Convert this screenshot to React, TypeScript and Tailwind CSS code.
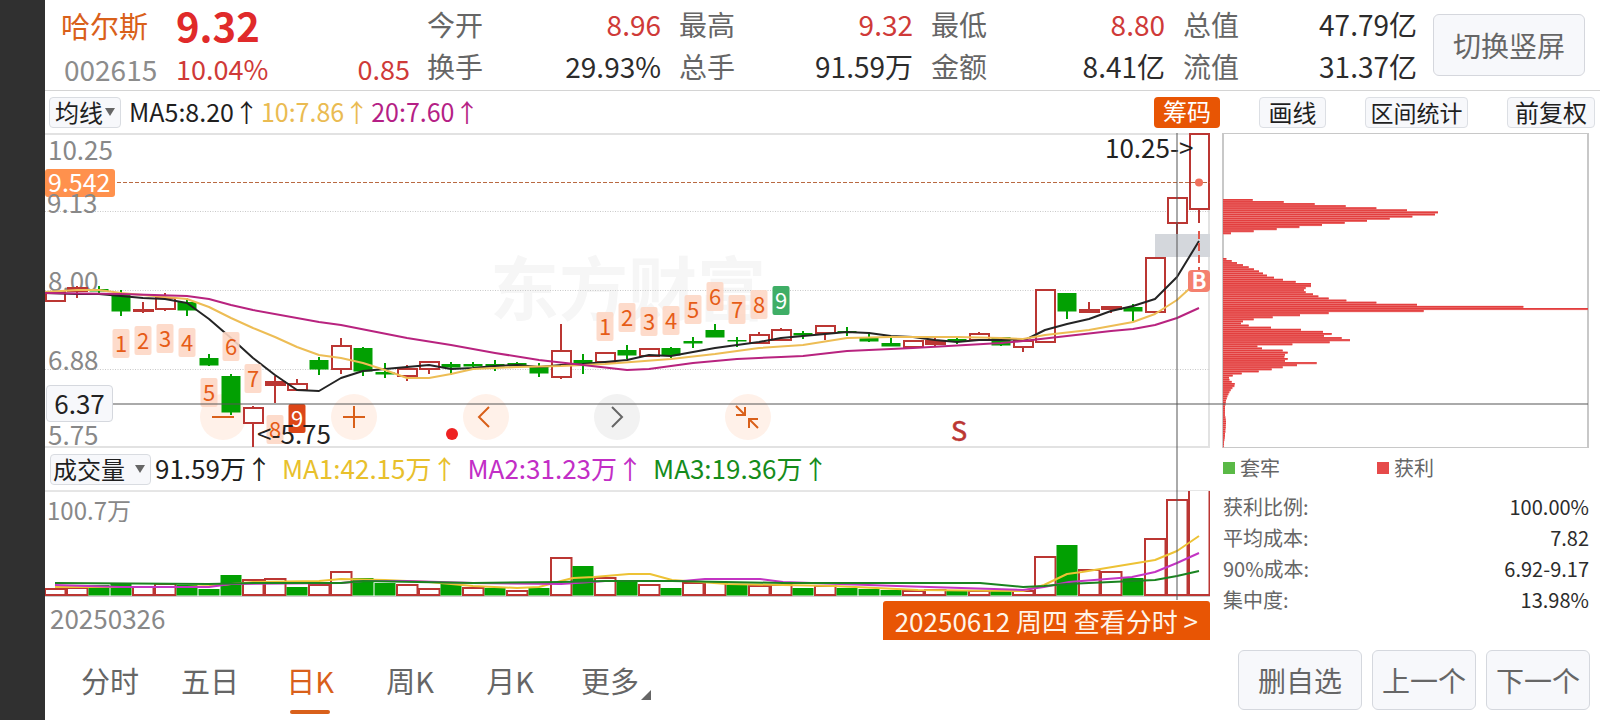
import React from "react";

type Candle = [kind: "u" | "d", top: number, bottom: number, high: number, low: number];

const STEP = 22;
const FIRST_X = 55;
const xAt = (i: number) => FIRST_X + i * STEP;

const RED = "#bb3633";
const GREEN = "#02a002";

const candles: Candle[] = [
  ["u", 292, 301, 292, 302], ["u", 288, 291, 286, 298], ["d", 289, 291, 286, 293], ["d", 293, 311, 290, 316],
  ["u", 310, 311, 302, 313], ["u", 298, 309, 293, 311], ["d", 302, 310, 298, 316], ["d", 358, 365, 354, 366],
  ["d", 376, 412, 374, 415], ["u", 408, 423, 406, 447], ["u", 382, 385, 376, 403], ["u", 384, 390, 379, 391],
  ["d", 360, 369, 357, 375], ["u", 346, 369, 338, 374], ["d", 348, 371, 347, 376], ["d", 372, 374, 363, 378],
  ["u", 369, 376, 365, 381], ["u", 362, 369, 362, 374], ["d", 364, 367, 362, 375], ["d", 364, 366, 362, 367],
  ["d", 364, 366, 360, 371], ["d", 363, 365, 362, 366], ["d", 367, 373, 363, 377], ["u", 351, 377, 324, 379],
  ["d", 360, 363, 354, 374], ["u", 353, 362, 353, 362], ["d", 350, 355, 345, 359], ["u", 349, 356, 349, 357],
  ["d", 348, 355, 347, 358], ["d", 341, 343, 337, 348], ["d", 330, 337, 324, 337], ["d", 340, 341, 337, 347],
  ["u", 335, 343, 332, 343], ["u", 330, 340, 328, 340], ["d", 333, 335, 331, 339], ["u", 326, 333, 326, 340],
  ["d", 331, 332, 327, 336], ["d", 337, 341, 332, 342], ["d", 343, 346, 338, 346], ["u", 341, 347, 341, 348],
  ["u", 341, 344, 338, 346], ["d", 339, 341, 338, 344], ["u", 334, 340, 332, 340], ["d", 337, 345, 337, 346],
  ["u", 341, 347, 341, 352], ["u", 290, 342, 290, 342], ["d", 293, 311, 293, 319], ["u", 310, 312, 302, 312],
  ["u", 307, 309, 306, 313], ["d", 307, 311, 304, 321], ["u", 258, 312, 258, 312], ["u", 198, 223, 198, 234],
  ["u", 134, 209, 134, 223],
];

const ma5 = "45,293 77,294 99,294 121,296 143,298 165,299 187,303 209,319 231,338 253,358 275,375 297,390 319,391 341,378 363,371 385,369 407,367 429,365 451,369 473,368 495,366 517,365 539,367 561,365 583,364 605,362 627,360 649,355 671,356 693,352 715,348 737,345 759,342 781,338 803,336 825,334 847,332 869,333 891,336 913,337 935,340 957,342 979,340 1001,340 1027,339 1045,330 1067,324 1089,319 1111,311 1133,306 1155,299 1177,277 1199,241";
const ma10 = "45,292 77,290 99,290 121,293 165,297 187,299 209,307 231,318 253,328 275,337 297,347 319,355 341,358 363,363 385,370 407,378 429,378 451,374 473,369 517,367 561,366 605,364 671,359 715,354 759,348 803,345 847,338 891,337 957,337 1001,338 1023,339 1045,335 1089,330 1111,326 1133,322 1155,314 1177,300 1199,280";
const ma20 = "45,293 121,294 187,296 209,299 231,305 253,310 319,322 341,325 407,338 451,345 495,353 539,360 583,365 627,370 649,369 693,363 737,359 781,357 803,356 847,351 913,348 1001,343 1023,341 1067,336 1111,331 1133,329 1155,325 1177,318 1199,308";

type Mark = [label: string, i: number, top: number, tone: "soft" | "sell" | "buy"];
const marks: Mark[] = [
  ["1", 3, 329, "soft"], ["2", 4, 326, "soft"], ["3", 5, 324, "soft"], ["4", 6, 328, "soft"], ["5", 7, 378, "soft"],
  ["6", 8, 332, "soft"], ["7", 9, 364, "soft"], ["8", 10, 415, "soft"], ["9", 11, 404, "sell"],
  ["1", 25, 312, "soft"], ["2", 26, 303, "soft"], ["3", 27, 307, "soft"], ["4", 28, 306, "soft"], ["5", 29, 295, "soft"],
  ["6", 30, 282, "soft"], ["7", 31, 295, "soft"], ["8", 32, 290, "soft"], ["9", 33, 286, "buy"],
];
const markFill = { soft: "#fdd7c5", sell: "#dc4618", buy: "#3fae66" };

const volumes: ["u" | "d", number][] = [
  ["u", 589], ["u", 588], ["d", 585], ["d", 583], ["u", 587], ["u", 584], ["d", 585], ["d", 589], ["d", 575],
  ["u", 580], ["u", 579], ["d", 587], ["u", 585], ["u", 572], ["d", 578], ["d", 583], ["u", 585], ["u", 589],
  ["d", 584], ["u", 588], ["d", 588], ["u", 591], ["d", 588], ["u", 558], ["d", 566], ["u", 578], ["d", 581],
  ["u", 585], ["d", 588], ["u", 583], ["u", 582], ["d", 585], ["u", 586], ["u", 585], ["d", 588], ["u", 586],
  ["d", 588], ["d", 589], ["d", 590], ["u", 591], ["u", 590], ["d", 591], ["u", 591], ["d", 591], ["u", 591],
  ["u", 557], ["d", 545], ["u", 570], ["u", 572], ["d", 578], ["u", 539], ["u", 500], ["u", 480],
];
const vma1 = "55,587 121,587 187,587 209,586 231,584 253,582 319,581 341,579 385,580 429,582 473,586 517,588 539,587 561,581 573,578 594,577 629,574 650,574 672,580 728,584 783,585 834,586 918,590 1023,591 1044,585 1067,574 1082,572 1155,560 1177,551 1199,536";
const vma2 = "55,585 121,587 209,587 231,584 341,583 363,581 407,581 473,583 561,584 605,581 683,581 705,579 760,579 783,582 897,586 1023,590 1044,587 1069,582 1132,577 1155,572 1177,563 1199,553";
const vma3 = "55,583 209,584 253,583 341,583 363,581 473,583 561,582 605,581 672,581 783,583 980,583 1023,587 1044,586 1067,584 1111,582 1155,580 1177,576 1199,571";

const upperChips = [89, 182, 275, 368, 460, 552, 645, 636, 568, 500, 432, 365, 297, 229, 161, 92, 24];
const lowerChips = [
  10, 26, 42, 60, 77, 93, 108, 120, 132, 153, 180, 218, 264, 264, 248, 243, 248, 270, 286, 317, 370, 460, 582, 901,
  1095, 602, 317, 231, 149, 92, 60, 54, 77, 144, 234, 300, 326, 303, 356, 381, 320, 208, 103, 117, 179, 194, 186,
  184, 194, 186, 281, 222, 179, 146, 107, 56, 29, 18, 19, 26, 35, 34, 28, 23, 19, 16, 13, 11, 9, 8, 7, 6, 6, 6, 6,
  6, 7, 8, 9, 9, 8, 8, 7, 7, 6, 6, 5, 4, 3, 3, 2,
];

const quotes = [
  { a: "今开", av: "8.96", b: "换手", bv: "29.93%" },
  { a: "最高", av: "9.32", b: "总手", bv: "91.59万" },
  { a: "最低", av: "8.80", b: "金额", bv: "8.41亿" },
  { a: "总值", av: "47.79亿", b: "流值", bv: "31.37亿", plain: true },
];

const costs = [
  ["获利比例:", "100.00%"],
  ["平均成本:", "7.82"],
  ["90%成本:", "6.92-9.17"],
  ["集中度:", "13.98%"],
];

function Header() {
  return (
    <header className="flex h-[91px] border-b border-[#d4d4d4] pr-[15px] pl-4">
      <div className="w-[349px] pt-1">
        <div className="flex h-[42px] items-center">
          <h1 className="w-[115px] text-[29px] leading-10 text-[#d9601a]">哈尔斯</h1>
          <strong className="text-[40px] leading-10 font-bold text-[#e02a2a]">9.32</strong>
        </div>
        <div className="flex h-[42px] items-center pt-1 text-[27px] leading-9 text-[#cf3a38]">
          <span className="w-[115px] pl-[3px] text-[28px] text-[#8c8c8c]">002615</span>
          <span>10.04%</span>
          <span className="ml-auto">0.85</span>
        </div>
      </div>
      <dl className="ml-[17px] grid flex-1 grid-cols-4 gap-x-[18px] pt-[3px] text-[28px] leading-[42px]">
        {quotes.map((q) => (
          <div key={q.a} className="grid grid-cols-[auto_1fr] content-start">
            <dt className="text-[#666]">{q.a}</dt>
            <dd className={q.plain ? "text-right text-[#2c2c2c]" : "text-right text-[#cf3a38]"}>{q.av}</dd>
            <dt className="text-[#666]">{q.b}</dt>
            <dd className="text-right text-[#2c2c2c]">{q.bv}</dd>
          </div>
        ))}
      </dl>
      <button className="mt-[14px] ml-4 h-[62px] w-[152px] rounded-md border border-[#d5d7dd] bg-[#f7f8fb] text-[28px] text-[#666]">
        切换竖屏
      </button>
    </header>
  );
}

function Picker({ label, value, className, caret }: { label: string; value: string; className: string; caret: string }) {
  return (
    <span className="relative flex">
      <select aria-label={label} className={`${className} h-[31px] appearance-none rounded-[4px] border border-[#d9dce1] bg-[#f7f8fb] pb-[2px] text-[24px] leading-7 text-[#1f1f1f]`}>
        <option>{value}</option>
      </select>
      <svg viewBox="0 0 10 8" className={`${caret} pointer-events-none absolute top-[11px] h-2 w-[10px]`} aria-hidden="true">
        <path d="M0 0h10L5 8z" fill="#666" />
      </svg>
    </span>
  );
}

const chip = "h-[31px] rounded-[4px] border border-[#dcdfe4] bg-[#f7f8fb] pb-[2px] leading-7 text-[#1f1f1f]";

function Toolbar() {
  return (
    <div className="flex h-[42px] items-center pr-[5px] pl-1">
      <Picker label="均线" value="均线" className="w-[72px] pl-[5px]" caret="right-[6px]" />
      <p className="ml-2 flex gap-[2px] pb-[2px] text-[25px] leading-8">
        <span className="text-[#1f1f1f]">MA5:8.20↑</span>
        <span className="text-[#eabb52]">10:7.86↑</span>
        <span className="text-[#b51f86]">20:7.60↑</span>
      </p>
      <div className="ml-auto flex gap-[39px] text-[24px]">
        <button className="h-[31px] w-[66px] rounded-[4px] bg-[#e85504] pb-[2px] leading-7 text-white">筹码</button>
        <button className={`${chip} w-[67px]`}>画线</button>
        <button className={`${chip} w-[103px] text-[23px]`}>区间统计</button>
        <button className={`${chip} w-[88px]`}>前复权</button>
      </div>
    </div>
  );
}

function PriceChart() {
  return (
    <svg viewBox="45 133 1165 315" className="block w-full" fontFamily="'Noto Sans CJK SC', sans-serif" fontSize="26">
      <text x="490" y="315" fontSize="69" fontWeight="bold" fill="#f6f6f6">东方财富</text>
      <path d="M45 134H1210M45 447H1210M1209 134V447" stroke="#e2e2e2" strokeWidth="2" />
      <path d="M45 211.5H1210M45 290.5H1210M45 369.5H1210" stroke="#c9c9c9" strokeDasharray="1 1.5" />
      <rect x="1155" y="234" width="55" height="23" fill="#d4d7dc" />
      <g fill="#888">
        <text x="48" y="160">10.25</text>
        <text x="48" y="291">8.00</text>
        <text x="48" y="370">6.88</text>
        <text x="48" y="445">5.75</text>
      </g>
      <g fill="#fff1e9">
        {[223, 354, 486, 748].map((x) => <circle key={x} cx={x} cy="417" r="23" />)}
      </g>
      <circle cx="617" cy="417" r="23" fill="#f2f2f2" />
      {candles.map(([kind, top, bottom, high, low], i) => {
        const x = xAt(i);
        if (kind === "d")
          return (
            <g key={i} fill={GREEN}>
              <rect x={x - 9.5} y={top} width="19" height={bottom - top + 0.5} />
              <rect x={x - 1} y={high} width="2" height={low - high} />
            </g>
          );
        return (
          <g key={i} stroke={RED} strokeWidth="2">
            <path d={`M${x} ${high}V${top}M${x} ${bottom}V${low}`} />
            <rect x={x - 9} y={top} width="19" height={bottom - top} fill={bottom - top < 4 ? RED : "#fff"} />
          </g>
        );
      })}
      <g fill="none" strokeWidth="2" strokeLinejoin="round">
        <polyline points={ma5} stroke="#242424" />
        <polyline points={ma10} stroke="#edbd55" />
        <polyline points={ma20} stroke="#b8237f" />
      </g>
      {marks.map(([label, i, top, tone]) => (
        <g key={`${label}-${i}`}>
          <rect x={xAt(i) - 8.5} y={top} width="17" height="29" rx="2" fill={markFill[tone]} fillOpacity={tone === "soft" ? 0.9 : 1} />
          <text x={xAt(i)} y={top + 23} fontSize="22" textAnchor="middle" fill={tone === "soft" ? "#e65c17" : "#fff"}>{label}</text>
        </g>
      ))}
      <path d="M45 182.5H1210" stroke="#b96a42" strokeDasharray="4 2" />
      <circle cx="1199" cy="182.5" r="4" fill="#f0705c" />
      <rect x="45" y="169" width="70" height="28" rx="3" fill="#ff914d" />
      <text x="48" y="192" fontSize="25" fill="#fff">9.542</text>
      <text x="47" y="213" fill="#888">9.13</text>
      <text x="1105" y="158" fill="#222">{"10.25->"}</text>
      <text x="257" y="444" fill="#222">{"<-5.75"}</text>
      <circle cx="452" cy="434" r="6" fill="#ee2222" />
      <text x="959" y="441" fontSize="27" textAnchor="middle" fill={RED} stroke={RED} strokeWidth="0.6">S</text>
      <path d="M1199 231V270" stroke="#e0574a" strokeWidth="2" strokeDasharray="8 4" />
      <rect x="1188" y="270" width="22" height="22" rx="4" fill="#f4806e" />
      <text x="1199" y="289" fontSize="22" textAnchor="middle" fontWeight="bold" fill="#fff">B</text>
    </svg>
  );
}

const tools = [
  { name: "缩小", d: "M12 23H34", color: "#d9601a" },
  { name: "放大", d: "M12 23H34M23 12V34", color: "#d9601a" },
  { name: "左移", d: "M27 13L17 23L27 33", color: "#d9601a" },
  { name: "右移", d: "M19 13L29 23L19 33", color: "#666" },
  { name: "收起", d: "M12 12L21 21M21 13V21H12M34 34L25 25M25 34V25H34", color: "#d9601a" },
];

function ChartTools() {
  return (
    <div className="absolute top-[261px] left-[155px] flex gap-[85px]">
      {tools.map((t) => (
        <button key={t.name} aria-label={t.name} className="size-[46px] rounded-full">
          <svg viewBox="0 0 46 46" fill="none" stroke={t.color} strokeWidth="2">
            <path d={t.d} />
          </svg>
        </button>
      ))}
    </div>
  );
}

function VolumeChart() {
  return (
    <svg viewBox="45 490 1165 107" className="block w-full" fontFamily="'Noto Sans CJK SC', sans-serif">
      <path d="M45 491H1210M45 596.5H1210M1209.5 491V596" stroke="#ccc" />
      <text x="47" y="520" fontSize="24" fill="#888">100.7万</text>
      <svg x="45" y="491" width="1165" height="105" viewBox="45 491 1165 105">
        {volumes.map(([kind, top], i) =>
          kind === "d" ? (
            <rect key={i} x={xAt(i) - 10.5} y={top} width="21" height={595.5 - top} fill={GREEN} />
          ) : (
            <rect key={i} x={xAt(i) - 10} y={top} width="20.5" height={595 - top} fill="#fff" stroke={RED} strokeWidth="2" />
          )
        )}
        <g fill="none" strokeWidth="2" strokeLinejoin="round">
          <polyline points={vma1} stroke="#edc235" />
          <polyline points={vma2} stroke="#c334c3" />
          <polyline points={vma3} stroke="#1a8420" />
        </g>
      </svg>
    </svg>
  );
}

function ChipRows({ data, start }: { data: number[]; start: number }) {
  return (
    <>
      {data.map((w, k) => {
        const y = start + (k * 6.25) / 3;
        return (
          <g key={k}>
            <rect x="1223" y={y} width={w / 3} height="2.1" fill="#ef7a78" />
            <rect x="1223" y={y} width={w / 3} height="1.5" fill="#e23f3f" />
          </g>
        );
      })}
    </>
  );
}

function ChipPanel() {
  return (
    <aside className="w-[367px] text-[20px] text-[#666]">
      <svg viewBox="1222 133 367 315" className="block w-full">
        <path d="M1222 133.5H1589M1222 447.5H1589" stroke="#c8c8c8" />
        <path d="M1223 133V448M1588 133V448" stroke="#c8c8c8" strokeWidth="2" />
        <ChipRows data={upperChips} start={199} />
        <ChipRows data={lowerChips} start={258} />
      </svg>
      <div className="grid h-10 grid-cols-[154px_1fr] items-center pl-px leading-7">
        <span className="flex items-center gap-[5px]"><i className="size-3 bg-[#5ab946]" />套牢</span>
        <span className="flex items-center gap-[5px]"><i className="size-3 bg-[#e64a4a]" />获利</span>
      </div>
      <dl className="pt-[3px] pl-px">
        {costs.map(([k, v]) => (
          <div key={k} className="flex justify-between leading-[31px]">
            <dt>{k}</dt>
            <dd className="text-[#2c2c2c]">{v}</dd>
          </div>
        ))}
      </dl>
    </aside>
  );
}

function Charts() {
  return (
    <section className="relative flex gap-3 pr-[11px]">
      <div className="relative min-w-0 flex-1">
        <PriceChart />
        <ChartTools />
        <div className="flex h-[42px] items-center pl-[5px]">
          <Picker label="指标" value="成交量" className="w-[101px] pl-[2px]" caret="right-[6px]" />
          <p className="ml-1 flex gap-[10px] pb-[2px] text-[26px] leading-8">
            <span className="text-[#1f1f1f]">91.59万↑</span>
            <span className="text-[#e8c02c]">MA1:42.15万↑</span>
            <span className="text-[#c22ec6]">MA2:31.23万↑</span>
            <span className="text-[#158c1b]">MA3:19.36万↑</span>
          </p>
        </div>
        <VolumeChart />
        <div className="absolute top-0 right-8 h-[467px] w-[2px] bg-[#555]/50" />
        <div className="flex items-start justify-between pt-1 pl-[5px] text-[26px]">
          <time className="leading-[34px] text-[#888]">20250326</time>
          <a href="#minute" className="relative rounded-t-[3px] bg-[#e85504] px-3 leading-[39px] text-[#fff4e8]">20250612 周四 查看分时 &gt;</a>
        </div>
      </div>
      <ChipPanel />
      <div className="pointer-events-none absolute top-[270px] right-3 left-[68px] h-[2px] bg-[#555]/50" />
      <output className="absolute top-[252px] left-px flex h-[37px] w-[67px] items-center justify-center rounded-[4px] border border-[#d5d8de] bg-[#f7f8fb] pb-[2px] text-[26px] leading-8 text-[#222]">6.37</output>
    </section>
  );
}

const periods = ["分时", "五日", "日K", "周K", "月K"];

function Footer() {
  return (
    <footer className="flex h-20 items-center justify-between pr-[10px] pl-[15px]">
      <nav className="flex h-full text-[29px] leading-9 text-[#666]">
        {periods.map((p) => (
          <button key={p} className={p === "日K" ? "relative w-[100px] text-[#d9601a]" : "w-[100px]"} aria-pressed={p === "日K"}>
            {p}
            {p === "日K" && <span className="absolute bottom-[6px] left-[30px] h-1 w-10 rounded-full bg-[#d9601a]" />}
          </button>
        ))}
        <button className="relative w-[100px]">
          更多
          <svg viewBox="0 0 10 10" className="absolute right-[9px] bottom-5 size-[10px]" aria-hidden="true">
            <path d="M10 0V10H0z" fill="#666" />
          </svg>
        </button>
      </nav>
      <div className="flex gap-[10px] text-[28px] text-[#666]">
        <button className="h-[60px] w-[124px] rounded-md border border-[#d5d8de] bg-[#f7f8fb]">删自选</button>
        <button className="h-[60px] w-[104px] rounded-md border border-[#d5d8de] bg-[#f7f8fb]">上一个</button>
        <button className="h-[60px] w-[104px] rounded-md border border-[#d5d8de] bg-[#f7f8fb]">下一个</button>
      </div>
    </footer>
  );
}

export default function App() {
  return (
    <div className="flex min-h-screen bg-white font-['Noto_Sans_CJK_SC',sans-serif]">
      <div className="w-[45px] shrink-0 bg-[#303030]" />
      <main className="min-w-0 flex-1">
        <Header />
        <Toolbar />
        <Charts />
        <Footer />
      </main>
    </div>
  );
}
